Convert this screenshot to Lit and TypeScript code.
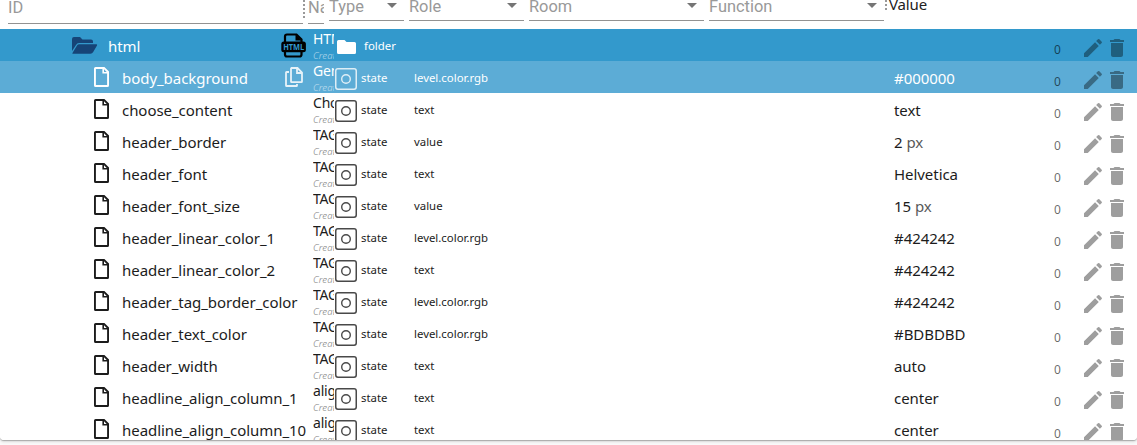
import { LitElement, html, css, svg, nothing } from "lit";
import { customElement, property } from "lit/decorators.js";
import { classMap } from "lit/directives/class-map.js";

interface Row {
  id: string;
  name: string;
  role?: string;
  value?: string;
  unit?: string;
  kind?: "folder" | "selected";
}

const ROWS: Row[] = [
  { id: "html", name: "HTML", kind: "folder" },
  { id: "body_background", name: "General", role: "level.color.rgb", value: "#000000", kind: "selected" },
  { id: "choose_content", name: "Choose", role: "text", value: "text" },
  { id: "header_border", name: "TAG", role: "value", value: "2", unit: "px" },
  { id: "header_font", name: "TAG", role: "text", value: "Helvetica" },
  { id: "header_font_size", name: "TAG", role: "value", value: "15", unit: "px" },
  { id: "header_linear_color_1", name: "TAG", role: "level.color.rgb", value: "#424242" },
  { id: "header_linear_color_2", name: "TAG", role: "text", value: "#424242" },
  { id: "header_tag_border_color", name: "TAG", role: "level.color.rgb", value: "#424242" },
  { id: "header_text_color", name: "TAG", role: "level.color.rgb", value: "#BDBDBD" },
  { id: "header_width", name: "TAG", role: "text", value: "auto" },
  { id: "headline_align_column_1", name: "align", role: "text", value: "center" },
  { id: "headline_align_column_10", name: "align", role: "text", value: "center" },
];

const icon = (cls: string, w: number, h: number, box: string, body: unknown) =>
  html`<svg class=${cls} width=${w} height=${h} viewBox=${box} fill="currentColor">${body}</svg>`;

const docIcon = icon("doc", 15, 20, "0 0 15 20",
  svg`<path fill-rule="evenodd" d="M1.6 0H10.4L15 4.6V18.4a1.6 1.6 0 0 1-1.6 1.6H1.6a1.6 1.6 0 0 1-1.6-1.6V1.6a1.6 1.6 0 0 1 1.6-1.6ZM1.9 1.9V18.1H13.1V6.5H8.4V1.9ZM10 2.2V4.9H12.7Z"/>`);
const openFolder = icon("open", 26, 18, "0 0 26 18",
  svg`<path d="M0 14V2Q0 0 2 0H8L10.5 2.5H19Q21 2.5 21 4.5V6H7Q5 6 4 8Z"/><path d="M.3 16.3 5 8.5Q5.8 7.2 7.2 7.2H24.2Q25.6 7.2 25 8.6L21.2 15Q20.3 16.7 18.4 16.7H1Q0 16.7.3 16.3Z"/>`);
const htmlBadge = html`<svg class="badge" width="26" height="26" viewBox="0 0 26 26">
  <path d="M4 9V3.5Q4 1.5 6 1.5H15.5L20.5 6.5V9M4 18V21.5Q4 23.5 6 23.5H18.5Q20.5 23.5 20.5 21.5V18" fill="none" stroke="#000" stroke-width="2.2"/>
  <path d="M14.5 1.5V7.5H20.5Z"/><rect x=".3" y="8.5" width="24.6" height="10.8" rx="2.5"/>
  <text x="2.2" y="17" textLength="21" lengthAdjust="spacingAndGlyphs">HTML</text></svg>`;
const copyIcon = html`<svg class="copy" width="18" height="20" viewBox="0 0 18 20" fill="none" stroke="currentColor" stroke-width="1.8">
  <path d="M6 1H12.5L17 5.5V14.5Q17 15.1 16.4 15.1H6.6Q6 15.1 6 14.5V1.6Q6 1 6.6 1M12 1V6H17M4 5H1.6Q1 5 1 5.6V18.4Q1 19 1.6 19H11.4Q12 19 12 18.4V17"/></svg>`;
const stateIcon = html`<svg class="state" width="22" height="22" viewBox="0 0 22 22" fill="none" stroke="currentColor">
  <rect x=".75" y=".75" width="20.5" height="20.5" rx="2.2" stroke-width="1.5"/><circle cx="11" cy="11" r="4.3" stroke-width="1.4"/></svg>`;
const closedFolder = icon("closed", 19, 15, "0 0 19 15",
  svg`<path d="M1.5 0H7.5L9.5 2H17.5a1.5 1.5 0 0 1 1.5 1.5V12.5a1.5 1.5 0 0 1-1.5 1.5H1.5a1.5 1.5 0 0 1-1.5-1.5V1.5a1.5 1.5 0 0 1 1.5-1.5Z"/>`);
const pencil = icon("tool", 24, 24, "0 0 24 24",
  svg`<path d="M3 17.25V21h3.75L17.81 9.94l-3.75-3.75L3 17.25zM20.71 7.04c.39-.39.39-1.02 0-1.41l-2.34-2.34a.9959.9959 0 0 0-1.41 0l-1.83 1.83 3.75 3.75 1.83-1.83z"/>`);
const trash = icon("tool", 24, 24, "0 0 24 24",
  svg`<path d="M6 19c0 1.1.9 2 2 2h8c1.1 0 2-.9 2-2V7H6v12zM19 4h-3.5l-1-1h-5l-1 1H5v2h14V4z"/>`);

@customElement("object-row")
class ObjectRow extends LitElement {
  @property({ attribute: false }) row!: Row;

  static styles = css`
    :host { display: block; height: 32px; flex: none; }
    .row { display: grid; height: 32px; grid-template-columns: 313px 21px 76px 484px 152px 35px 1fr; color: #1c1c1c; white-space: nowrap; background: #fff; }
    .row.folder { background: #3399cc; color: #fff; }
    .row.selected { background: #5cacd6; color: #fff; }
    svg { display: block; flex: none; }
    .id { display: flex; padding-left: 94px; }
    .folder .id { padding-left: 72px; }
    .doc { margin-top: 6px; }
    .open { margin-top: 8px; color: #164477; }
    .label { font-size: 15px; line-height: 22px; padding: 6px 0 0 13px; letter-spacing: -0.05px; flex: 1; }
    .folder .label { padding-left: 10px; }
    .badge { margin: 4px 6px 0 0; }
    .badge text { font: 700 8px "Open Sans", sans-serif; fill: #3399cc; }
    .copy { margin: 6px 10px 0 0; opacity: .85; }
    .name { overflow: hidden; font-size: 14px; line-height: 18px; padding-top: 1px; letter-spacing: -0.2px; }
    .sub { font-size: 9.6px; line-height: 12px; font-style: italic; opacity: .6; margin-top: 2px; letter-spacing: .1px; font-weight: 300; }
    .type { display: flex; padding-left: 1px; font-size: 11.4px; line-height: 16px; }
    .type span, .role { padding-top: 9px; }
    .type span { padding-left: 4px; }
    .folder .type span { padding-left: 8px; }
    .state { margin-top: 7px; opacity: .8; }
    .closed { margin: 11px 0 0 2px; }
    .role { font-size: 11.4px; line-height: 16px; padding-left: 4px; }
    .value { font-size: 15px; line-height: 22px; padding-top: 6px; letter-spacing: -0.05px; }
    .unit { opacity: .75; }
    .zero { font-size: 12px; line-height: 16px; padding: 13px 0 0 8px; color: rgba(0, 0, 0, .6); }
    .tools { display: flex; padding-top: 7px; color: rgba(0, 0, 0, .38); }
  `;

  render() {
    const r = this.row;
    const folder = r.kind === "folder";
    return html`<div class=${classMap({ row: true, folder, selected: r.kind === "selected" })}>
      <div class="id">${folder ? openFolder : docIcon}<span class="label">${r.id}</span>
        ${folder ? htmlBadge : r.kind ? copyIcon : nothing}</div>
      <div class="name">${r.name}<div class="sub">Created</div></div>
      <div class="type">${folder ? closedFolder : stateIcon}<span>${folder ? "folder" : "state"}</span></div>
      <div class="role">${r.role}</div>
      <div class="value">${r.value}${r.unit ? html` <span class="unit">${r.unit}</span>` : nothing}</div>
      <div class="zero">0</div>
      <div class="tools">${pencil}${trash}</div>
    </div>`;
  }
}

@customElement("app-root")
class AppRoot extends LitElement {
  static styles = css`
    :host { display: block; height: 445px; overflow: hidden; background: #fafafa; font-family: "Noto Sans", "Open Sans", sans-serif; }
    .panel { height: 440px; display: flex; flex-direction: column; overflow: hidden; background: #fff; border-radius: 0 0 4px 4px; box-shadow: 0 1px 1px #aaa, 0 2px 3px #ddd; }
    .head { height: 29px; flex: none; display: flex; padding-left: 8px; overflow: hidden; font: 16.4px/20px Roboto, sans-serif; color: #999; }
    .field { box-sizing: border-box; height: 21px; margin-right: 5px; border-bottom: 1px solid #929292; display: flex; justify-content: space-between; overflow: hidden; white-space: nowrap; }
    .field span { margin-top: -3px; }
    .tall { height: 24px; }
    .tall span { margin-top: -2px; }
    .id { width: 295px; margin-right: 0; }
    .name { width: 16px; }
    .type { width: 75px; }
    .role { width: 115px; }
    .wide { width: 175px; }
    .arrow { width: 10px; height: 5px; margin: 3px 7px 0 0; background: #757575; clip-path: polygon(0 0, 100% 0, 50% 100%); }
    .grip { width: 2px; height: 18px; margin: 0 3px 0 0; background: repeating-linear-gradient(#999 0 2px, transparent 2px 4px); }
    .grip.last { height: 11px; margin: 0 2px 0 -4px; }
    .value { font: 15px/20px "Noto Sans", sans-serif; color: #222; margin-top: -6px; letter-spacing: -.15px; }
  `;

  render() {
    const select = (label: string, cls: string) =>
      html`<div class="field ${cls}"><span>${label}</span><i class="arrow"></i></div>`;
    return html`<div class="panel">
      <div class="head">
        <div class="field tall id"><span>ID</span></div>
        <i class="grip first"></i>
        <div class="field tall name"><span>Name</span></div>
        ${select("Type", "type")}${select("Role", "role")}${select("Room", "wide")}${select("Function", "wide")}
        <i class="grip last"></i>
        <div class="value">Value</div>
      </div>
      ${ROWS.map((row) => html`<object-row .row=${row}></object-row>`)}
    </div>`;
  }
}
